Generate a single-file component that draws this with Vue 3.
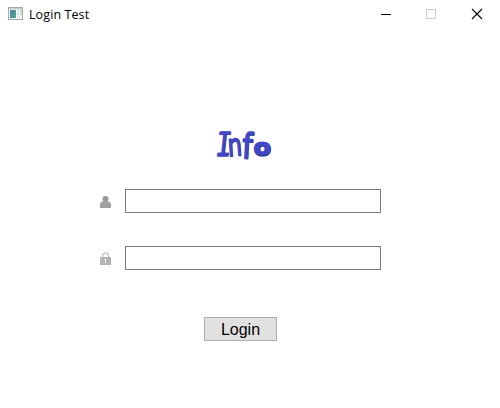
<script setup>
import { ref } from 'vue'

const username = ref('')
const password = ref('')
</script>

<template>
  <div class="window">
    <header class="titlebar">
      <svg class="app-icon" width="16" height="14" viewBox="0 0 16 14">
        <defs>
          <linearGradient id="pane" x1="0" y1="0" x2="1" y2="1">
            <stop offset="0" stop-color="#4d80b4" />
            <stop offset="1" stop-color="#52ab7c" />
          </linearGradient>
        </defs>
        <rect x="0.5" y="0.5" width="14" height="12" fill="#f4f5f6" stroke="#a5a9af" />
        <rect x="1" y="1" width="13" height="1.5" fill="#c9cdd2" />
        <rect x="2" y="3" width="6" height="8" fill="url(#pane)" />
        <rect x="9" y="3" width="2" height="8" fill="#e4e7e8" />
        <rect x="12" y="3" width="2" height="5" fill="#c6dccd" />
      </svg>
      <span class="title">Login Test</span>
      <div class="controls">
        <svg width="46" height="28" viewBox="0 0 46 28"><path d="M18 14.5h10" stroke="#000" /></svg>
        <svg width="46" height="28" viewBox="0 0 46 28"><rect x="17.5" y="9.5" width="9" height="9" fill="none" stroke="#ccc" /></svg>
        <svg width="46" height="28" viewBox="0 0 46 28"><path d="M17 9l10 10M27 9L17 19" fill="none" stroke="#000" stroke-width="1.1" /></svg>
      </div>
    </header>
    <main class="content">
      <svg class="logo" width="60" height="36" viewBox="0 0 60 36">
        <g class="shade" transform="translate(0.4 0.6)">
          <text class="mono" transform="translate(0.8 28.8) skewX(-6) scale(0.78 1)">I</text>
          <text transform="translate(14.2 29) rotate(-4) scale(0.98 1.34)">n</text>
          <text transform="translate(27.6 31) rotate(3) scale(1.25 1.52)">f</text>
          <text class="round" transform="translate(39.4 28.4) scale(1.16 1.04)">o</text>
        </g>
        <g class="face">
          <text class="mono" transform="translate(0.8 28.8) skewX(-6) scale(0.78 1)">I</text>
          <text transform="translate(14.2 29) rotate(-4) scale(0.98 1.34)">n</text>
          <text transform="translate(27.6 31) rotate(3) scale(1.25 1.52)">f</text>
          <text class="round" transform="translate(39.4 28.4) scale(1.16 1.04)">o</text>
        </g>
      </svg>
      <label class="field">
        <svg class="field-icon" width="13" height="14" viewBox="0 0 13 14">
          <path d="M1 12V9.8Q1 7 4.3 6.6Q6.5 8 8.7 6.6Q12 7 12 9.8V12Q12 13 11 13H2Q1 13 1 12Z" fill="#a0a0a0" />
          <circle cx="6.5" cy="4" r="3.1" fill="#999" />
        </svg>
        <input v-model="username" class="entry" type="text">
      </label>
      <label class="field second">
        <svg class="field-icon" width="13" height="14" viewBox="0 0 13 14">
          <path d="M3.5 6V4a3 3 0 0 1 6 0V6" fill="none" stroke="#b7b7b7" stroke-width="1.2" />
          <rect x="1" y="5" width="11" height="8" rx="0.5" fill="#b4b4b4" />
          <rect x="6" y="7" width="1" height="4" fill="#fff" />
        </svg>
        <input v-model="password" class="entry" type="password">
      </label>
      <button class="login" type="button">Login</button>
    </main>
  </div>
</template>

<style>
body {
  background: #fff;
}
</style>

<style scoped>
.window {
  width: 500px;
  height: 408px;
  overflow: hidden;
  background: #fff;
  color: #000;
}
.titlebar {
  display: flex;
  align-items: center;
  height: 28px;
  padding-left: 8px;
}
.title {
  margin: 1px 0 0 5px;
  font: 12.5px/20px "Open Sans", "Noto Sans", sans-serif;
  letter-spacing: 0.1px;
}
.controls {
  display: flex;
  margin-right: -1px;
  margin-left: auto;
}
.content {
  display: flex;
  flex-direction: column;
  align-items: center;
  width: 480px;
}
.logo {
  margin: 99px 0 0 8px;
  overflow: visible;
}
.logo text {
  font: 23px "DejaVu Sans", sans-serif;
  stroke-width: 0.8px;
  stroke-linejoin: round;
}
.logo .mono {
  font: 33px "DejaVu Sans Mono", monospace;
}
.logo .round {
  font: bold 22px "DejaVu Sans", sans-serif;
  stroke-width: 1.2px;
}
.shade {
  fill: #292a78;
  stroke: #292a78;
}
.face {
  fill: #4147c8;
  stroke: #4147c8;
}
.field {
  display: flex;
  align-items: center;
  gap: 13px;
  width: 282px;
  height: 24px;
  margin: 26px 0 0 -1px;
}
.field.second {
  margin-top: 33px;
}
.field-icon {
  margin-top: 2px;
}
.entry {
  box-sizing: border-box;
  width: 256px;
  height: 24px;
  margin: 0;
  padding: 2px 4px;
  border: 1px solid #7a7a7a;
  border-radius: 0;
  outline: none;
  background: #fff;
  font: 16px "Liberation Sans", Arial, sans-serif;
}
.login {
  width: 73px;
  height: 24px;
  margin: 47px 0 0 1px;
  padding: 1px 0 0;
  border: 1px solid #adadad;
  border-radius: 0;
  background: #e1e1e1;
  color: #000;
  font: 16px/21px "Liberation Sans", Arial, sans-serif;
}
</style>
